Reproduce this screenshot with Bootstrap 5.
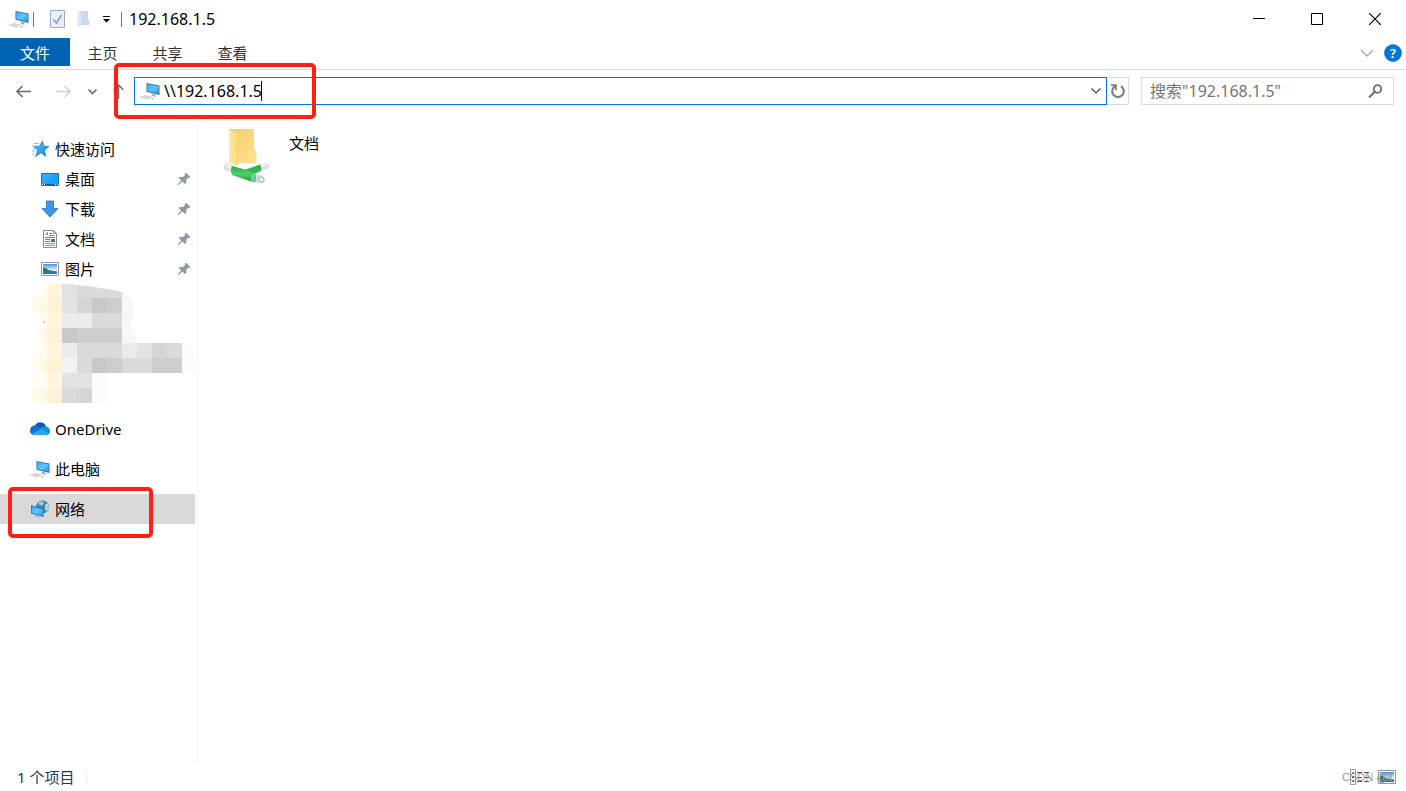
<!DOCTYPE html>
<html lang="zh-CN">
<head>
<meta charset="utf-8">
<meta name="viewport" content="width=device-width, initial-scale=1">
<title>192.168.1.5</title>
<link href="https://cdn.jsdelivr.net/npm/bootstrap@5.3.0/dist/css/bootstrap.min.css" rel="stylesheet">
<style>
  body { font: 15px/20px "Noto Sans", "Noto Sans CJK SC", sans-serif; color: #000; background: #fff; }
  svg { display: block; flex: none; }
  button { font: inherit; border: 0; background: none; padding: 0; color: inherit; }
  a { color: inherit; text-decoration: none; }
  .titlebar { height: 38px; padding-left: 9px; }
  .window-title { font-size: 16px; margin-left: 7px; }
  .divider { width: 1px; height: 15px; background: #777; }
  .title-divider { margin-left: 10px; }
  .caption-buttons { margin-right: 2px; }
  .win-btn { width: 58px; height: 38px; display: grid; place-items: center; }
  .ribbon { height: 32px; border-bottom: 1px solid #dadbdc; color: #333; }
  .ribbon-tab { width: 65px; height: 28px; line-height: 30px; text-align: center; display: block; }
  .ribbon-tab.file { width: 70px; background: #0063b1; color: #fff; }
  .ribbon-tools { padding: 6px 4px 0 0; gap: 10px; }
  .addressbar { height: 51px; padding: 7px 12px 0 15px; }
  .nav-buttons { height: 28px; gap: 15px; margin-right: 9px; }
  .field { height: 28px; border: 1px solid #d9d9d9; position: relative; }
  .field input { border: 0; outline: 0; background: none; min-width: 0; padding: 0; height: 26px; font: inherit; font-size: 16px; color: inherit; }
  .field.location { border-color: #0078d7; padding: 0 4px 0 5px; }
  .field.search { width: 253px; margin-left: 12px; padding: 0 10px 0 8px; color: #6d6d6d; }
  .field.search input::placeholder { color: #757575; opacity: 1; }
  .refresh { width: 22px; height: 28px; border: 1px solid #d9d9d9; border-left: 0; display: grid; place-items: center; }
  .caret { position: absolute; left: 126px; top: 3px; width: 1px; height: 20px; background: #000; }
  .marker { position: absolute; border: 4px solid #ff2015; border-radius: 5px; pointer-events: none; z-index: 2; }
  .marker.on-address { left: -21px; top: -15px; width: 202px; height: 56px; }
  .marker.on-network { left: 8px; top: -7px; width: 145px; height: 51px; }
  .sidebar { width: 198px; padding-top: 13px; border-right: 1px solid #f3f3f3; }
  .tree-item { height: 30px; padding-left: 30px; gap: 5px; position: relative; margin-right: 2px; }
  .tree-item.child { padding-left: 40px; padding-right: 4px; }
  .tree-item.spaced { margin-bottom: 10px; }
  .tree-item.current { background: #d9d9d9; }
  .mosaic { margin: -2px 0 10px 32px; }
  .share { padding: 6px 0 0 25px; gap: 18px; }
  .share-name { padding-top: 6px; }
  .statusbar { height: 29px; padding: 0 10px 0 17px; color: #1e395b; }
  .status-divider { width: 1px; height: 15px; margin-left: 12px; background: #eee; }
  .watermark { position: absolute; left: -8px; top: -2px; font: 11px/20px "Liberation Sans", sans-serif; color: #999; white-space: nowrap; }
</style>
</head>
<body class="vh-100 d-flex flex-column overflow-hidden">

<svg width="0" height="0" class="position-absolute" aria-hidden="true">
  <defs>
    <linearGradient id="screen" x2="1" y2="1"><stop stop-color="#35aefc"/><stop offset=".5" stop-color="#62c3fd"/><stop offset="1" stop-color="#2196e8"/></linearGradient>
    <linearGradient id="star" x2="1" y2="1"><stop stop-color="#5fd0ff"/><stop offset="1" stop-color="#0b7cd8"/></linearGradient>
    <linearGradient id="sky" x2="0" y2="1"><stop stop-color="#4d8fe0"/><stop offset=".6" stop-color="#e4f3fb"/></linearGradient>
    <linearGradient id="flap" x2="1"><stop stop-color="#ffe9a8"/><stop offset="1" stop-color="#f8d674"/></linearGradient>
    <linearGradient id="back" x2="1" y2="1"><stop stop-color="#efca6c"/><stop offset="1" stop-color="#ffe290"/></linearGradient>
    <linearGradient id="pipe" x2="0" y2="1"><stop stop-color="#2cae49"/><stop offset=".5" stop-color="#4fd068"/><stop offset="1" stop-color="#1f9a3c"/></linearGradient>
    <symbol id="pc" viewBox="0 0 20 20">
      <path d="M6.500 2l13 2.500v9.500l-13-3.200z" fill="#33759c"/><path d="M7.300 3l11.400 2.200v7.600L7.300 10z" fill="url(#screen)"/>
      <path d="M12 12.300l3 .7v1.200l2 .8-2.500.8-3-1z" fill="#aab3ba"/>
      <path d="M0 15.500l6-1.500 7 2-5 2z" fill="#dce1e5"/><path d="M0 15.500l8 2.300v.7l-8-2.300z" fill="#b9c1c7"/><path d="M2.500 15.500l4-1M5 16.200l4-1M7.500 16.900l4-1" stroke="#c3cad0" stroke-width=".6"/><path d="M10.500 18l2-1 2 .5-2 1.200z" fill="#b9c1c7"/>
    </symbol>
    <symbol id="pin" viewBox="0 0 14 14">
      <path d="M9 .8l4.500 4.100-1.200 1.100-1-.2-2 2 .1 3-1.400 1.300-2.600-2.500L1.400 13 .5 12.400l3.700-4L1.700 6l1.200-1.200 3.100.2 2.100-2-.5-1z" fill="#8e9aa3"/>
    </symbol>
    <symbol id="photo" viewBox="0 0 18 14">
      <path d="M.5.500h17v13H.500z" fill="#fff" stroke="#979797"/><path d="M2 2h14v10H2z" fill="url(#sky)"/>
      <path d="M2 5.500l3 .5 3 2.300 8 1.200v1H2z" fill="#3b7b5c"/><path d="M2 9.800h14V12H2z" fill="#2878ae"/>
    </symbol>
  </defs>
</svg>

<header>
  <div class="titlebar d-flex align-items-center">
    <svg width="20" height="20"><use href="#pc"/></svg>
    <span class="divider ms-1"></span>
    <button class="ms-3" aria-label="属性"><svg width="15" height="18" viewBox="0 0 15 18"><path d="M.5.500h14v17H.500z" fill="#e9eff9" stroke="#9aabc8"/><path d="M3.500 9.500l3 3.500L11.500 5" fill="none" stroke="#7f9bc9" stroke-width="1.500"/></svg></button>
    <button class="ms-2 ps-1" aria-label="新建文件夹"><svg width="13" height="18" viewBox="0 0 13 18"><path d="M2 1h9v9l1.500 1v4H3z" fill="#c9d7ef"/><path d="M.5 1L4 3v14.500L.5 16z" fill="#dfe8f7"/></svg></button>
    <button class="ms-2 ps-1" aria-label="自定义快速访问工具栏"><svg width="9" height="8" viewBox="0 0 9 8"><path d="M1 1.500h7" stroke="#000"/><path d="M1 4h7L4.500 7.500z"/></svg></button>
    <span class="divider title-divider"></span>
    <span class="window-title">192.168.1.5</span>
    <div class="caption-buttons ms-auto d-flex">
      <button class="win-btn" aria-label="最小化"><svg width="12" height="12" viewBox="0 0 12 12"><path d="M0 5.500h12" stroke="#000"/></svg></button>
      <button class="win-btn" aria-label="最大化"><svg width="12" height="12" viewBox="0 0 12 12"><path d="M.5.500h11v11H.500z" fill="none" stroke="#000"/></svg></button>
      <button class="win-btn" aria-label="关闭"><svg width="12" height="12" viewBox="0 0 12 12"><path d="M0 0l12 12M12 0L0 12" stroke="#000" stroke-width="1.200"/></svg></button>
    </div>
  </div>

  <nav class="ribbon d-flex align-items-start">
    <a class="ribbon-tab file" href="#">文件</a>
    <a class="ribbon-tab" href="#">主页</a>
    <a class="ribbon-tab" href="#">共享</a>
    <a class="ribbon-tab" href="#">查看</a>
    <div class="ribbon-tools ms-auto d-flex align-items-center">
      <button aria-label="展开功能区"><svg width="14" height="8" viewBox="0 0 14 8"><path d="M1 1l6 6 6-6" fill="none" stroke="#aaa" stroke-width="1.300"/></svg></button>
      <button aria-label="帮助"><svg width="18" height="18" viewBox="0 0 20 20"><circle cx="10" cy="10" r="9.500" fill="#0078d7" stroke="#0a62ad" stroke-width=".6"/><text x="10" y="15" text-anchor="middle" font-size="14" font-weight="600" fill="#fff">?</text></svg></button>
    </div>
  </nav>

  <div class="addressbar d-flex">
    <div class="nav-buttons d-flex align-items-center">
      <button aria-label="后退"><svg width="17" height="14" viewBox="0 0 17 14"><path d="M16 7.500H2M7.500 2L2 7.500 7.500 13" fill="none" stroke="#6a6a6a" stroke-width="1.600"/></svg></button>
      <button class="ps-1 ms-1" aria-label="前进"><svg width="17" height="14" viewBox="0 0 17 14"><path d="M1 7.500h14M9.500 2L15 7.500 9.500 13" fill="none" stroke="#d0d0d0" stroke-width="1.400"/></svg></button>
      <button aria-label="最近浏览的位置"><svg width="11" height="7" viewBox="0 0 11 7"><path d="M1.500 1.500l4 4 4-4" fill="none" stroke="#6a6a6a" stroke-width="1.700"/></svg></button>
      <button aria-label="向上"><svg width="12" height="17" viewBox="1 0 12 17"><path d="M6.500 16V2M1.500 7l5-5 5 5" fill="none" stroke="#777" stroke-width="1.600"/></svg></button>
    </div>
    <div class="field location d-flex align-items-center flex-grow-1">
      <svg width="20" height="20"><use href="#pc"/></svg>
      <input class="flex-grow-1 ms-1" type="text" aria-label="地址" value="\\192.168.1.5">
      <span class="caret"></span>
      <button aria-label="以前的位置"><svg width="12" height="8" viewBox="0 0 12 8"><path d="M1.500 1.500L6 6l4.500-4.500" fill="none" stroke="#444" stroke-width="1.200"/></svg></button>
      <div class="marker on-address"></div>
    </div>
    <button class="refresh" aria-label="刷新"><svg width="16" height="16" viewBox="0 0 16 16"><path d="M11 3.300A5.800 5.800 0 1 1 5 3.300" fill="none" stroke="#808080" stroke-width="2.200"/><path d="M1 2.200h5v5" fill="none" stroke="#808080" stroke-width="1.800"/></svg></button>
    <div class="field search d-flex align-items-center">
      <input class="flex-grow-1" type="text" aria-label="搜索" placeholder='搜索"192.168.1.5"'>
      <svg width="15" height="15" viewBox="0 0 15 15" fill="none" stroke="#6d6d6d"><circle cx="9.500" cy="5" r="3.800" stroke-width="1.800"/><path d="M6.500 8L1 13.500" stroke-width="2.200"/></svg>
    </div>
  </div>
</header>

<main class="d-flex flex-grow-1">
  <nav class="sidebar flex-shrink-0">
    <a href="#" class="tree-item d-flex align-items-center"><svg width="20" height="20" viewBox="0 0 20 20"><path d="M12.500 2l1.300 5.200 5.200.300-4.500 3.500 1.200 6.300-4.700-3.600-5.300 3.800 2-6.300L4 7.500l5.500-.3z" fill="url(#star)" stroke="#1277bd" stroke-width=".7"/><path d="M4 4.500h5M2 7h3M3 9.500h3M2 12h4M2 15h3" stroke="#7cc6ee"/></svg>快速访问</a>
    <a href="#" class="tree-item child d-flex align-items-center"><svg width="20" height="20" viewBox="0 0 20 20"><path d="M1.500 4.500h17v12h-17z" fill="#1ba1f8" stroke="#0b72bd"/><path d="M2 16V5h12z" fill="#2fabfb"/><path d="M2 15.500h16" stroke="#075d9c"/><path d="M2 15.500h1M4 15.500h1M15 15.500h1M17 15.500h1" stroke="#fff"/></svg><span class="flex-grow-1">桌面</span><svg width="14" height="14"><use href="#pin"/></svg></a>
    <a href="#" class="tree-item child d-flex align-items-center"><svg width="20" height="20" viewBox="0 0 20 20"><path d="M6.500 2h7v7.500h4.500L10 18 2 9.500h4.500z" fill="#3897e6" stroke="#2672b8" stroke-width=".8"/></svg><span class="flex-grow-1">下载</span><svg width="14" height="14"><use href="#pin"/></svg></a>
    <a href="#" class="tree-item child d-flex align-items-center"><svg width="20" height="20" viewBox="0 0 20 20"><path d="M3.500 1.500h10l3 3v14h-13z" fill="#fff" stroke="#8c8c8c"/><path d="M13.500 1.500v3h3" fill="none" stroke="#8c8c8c"/><path d="M5.500 6l2-2.500V6M9 4.500h3M9 6.500h5.500M5 8.500h10M5 10.500h5M5 12.500h5" fill="none" stroke="#3d8fc9"/><path d="M11 10h4v3h-4z" fill="#3878a8"/><path d="M5 14.500h10M5 16.500h10" stroke="#999"/></svg><span class="flex-grow-1">文档</span><svg width="14" height="14"><use href="#pin"/></svg></a>
    <a href="#" class="tree-item child d-flex align-items-center"><svg width="20" height="20" viewBox="0 0 20 20"><use href="#photo" x="1" y="3" width="18" height="14"/></svg><span class="flex-grow-1">图片</span><svg width="14" height="14"><use href="#pin"/></svg></a>

    <svg class="mosaic" width="165" height="122" viewBox="0 0 165 122" shape-rendering="crispEdges" aria-hidden="true">
      <clipPath id="blob"><path d="M0 121V91h5Q-4 75 7 61 5 50 12 40 0 34 0 22 2 3 20 1 60 3 90 10 110 20 98 44 105 50 105 61H150Q164 63 165 91H75V121z"/></clipPath>
      <g clip-path="url(#blob)">
        <path fill="#fffcf2" d="M0 0h15v16H0zM0 31h15v15H0zM0 61h15v15H0zM0 91h15v15H0z"/>
        <path fill="#fff9ea" d="M0 16h15v15H0zM0 46h15v15H0zM0 76h15v15H0zM0 106h15v16H0z"/>
        <path fill="#fdf5de" d="M15 0h15v16H15zM15 31h15v15H15zM15 61h15v15H15zM15 91h15v15H15z"/>
        <path fill="#fdf1d6" d="M15 16h15v15H15zM15 46h15v15H15zM15 76h15v15H15zM15 106h15v16H15z"/>
        <path fill="#e2e2e2" d="M30 0h15v31H30zM30 91h30v15H30zM105 61h15v15h-15z"/>
        <path fill="#ececec" d="M30 31h30v15H30zM30 61h15v15H30z"/>
        <path fill="#c9c8c8" d="M30 46h15v15H30zM60 16h15v15H60zM60 76h15v15H60z"/>
        <path fill="#f3f3f3" d="M30 76h15v15H30z"/>
        <path fill="#dadada" d="M45 0h45v16H45zM60 31h30v15H60zM45 61h45v15H45zM45 76h15v15H45zM30 106h15v16H30zM90 76h30v15H90zM135 61h15v15h-15z"/>
        <path fill="#d5d4d7" d="M45 16h15v15H45zM45 106h15v16H45zM120 61h15v15h-15z"/>
        <path fill="#cdcdcf" d="M75 16h15v15H75zM45 46h45v15H45zM75 76h15v15H75zM120 76h30v15h-30z"/>
        <path fill="#f6f8f8" d="M90 0h15v61H90z"/><path fill="#eaecec" d="M90 61h15v15H90z"/>
        <path fill="#f9fbfd" d="M150 61h15v30h-15zM60 91h15v31H60z"/>
      </g>
      <path fill="#f3d477" d="M11 39h2v2h-2z"/>
    </svg>

    <a href="#" class="tree-item spaced d-flex align-items-center"><svg width="20" height="20" viewBox="0 0 20 20"><path d="M5 6.500a6 6 0 0 1 11 1l-4 3-7-1z" fill="#0a5fb4"/><path d="M4 6.500Q8 6 11 9.500L5 16Q0 16 0 11.500 0 7.500 4 6.500z" fill="#1075cf"/><path d="M10 10Q13 6.500 16.500 7.500 20 8.500 20 12q0 4-4 4h-4z" fill="#1590df"/><path d="M11 10l8 4.500Q18 16 16 16H4.500Q3 16 2 15z" fill="#2ba7ef"/></svg>OneDrive</a>
    <a href="#" class="tree-item spaced d-flex align-items-center"><svg width="20" height="20"><use href="#pc"/></svg>此电脑</a>
    <a href="#" class="tree-item current d-flex align-items-center"><svg width="20" height="20" viewBox="0 0 20 20"><circle cx="12.500" cy="8" r="6.500" fill="#4387a6"/><path d="M8.500 3.500q3-2 5.500 0l-2 3-3-1zM15 5.500l3-1 1 4-2 4-2-2z" fill="#a5d3e5"/><path d="M1 6l12.500 4v8L1 14.500z" fill="#2878aa"/><path d="M1.800 7.200l11 3.500v6.200l-11-3.200z" fill="url(#screen)"/><path d="M4.500 16l5 1.500v1L4.500 17z" fill="#8fa5b3"/></svg>网络<span class="marker on-network"></span></a>
  </nav>

  <section class="flex-grow-1">
    <a href="#" class="share d-inline-flex">
      <svg width="48" height="58" viewBox="0 0 48 58">
        <path d="M6 2h25v20l2.500 2.500V36H12z" fill="url(#back)"/><path d="M6 2l9 5v32L6 36z" fill="url(#flap)"/>
        <path d="M4 40l8 3" stroke="#dde0e2" stroke-width="7" stroke-linecap="round"/><path d="M36 41l7-2" stroke="#dde0e2" stroke-width="6" stroke-linecap="round"/>
        <path d="M4 39l7 2.500M37 39.500l6-2" stroke="#f5f6f6" stroke-width="2" stroke-linecap="round"/>
        <path d="M32 51l6 1.500" stroke="#d3d8da" stroke-width="7.500" stroke-linecap="round"/><circle cx="38.500" cy="52.500" r="2.500" fill="#f4f5f5" stroke="#aab0b3"/>
        <path d="M21 43L37 37.500q2 2 1 6.500L29 48z" fill="#2fb74d"/>
        <path d="M9 39L24 43q5 1 8 3.500 2 2 0 8.500l-4-.5L9 48q-2-5 0-9z" fill="url(#pipe)"/>
        <path d="M30 46.500q-3 3-2 8h4.500q-2-4 1-7z" fill="#6fcfa0"/>
      </svg>
      <span class="share-name">文档</span>
    </a>
  </section>
</main>

<footer class="statusbar d-flex align-items-center">
  <span>1 个项目</span><span class="status-divider"></span>
  <div class="ms-auto d-flex align-items-center gap-2 position-relative">
    <span class="watermark">CSDN @ll</span>
    <button aria-label="详细信息"><svg width="20" height="16" viewBox="0 0 20 16"><path d="M.5.500h5v15h-5z" fill="#fff" fill-opacity=".6" stroke="#999"/><path d="M2 3h2v2H2z" fill="#4a90d0"/><path d="M2 7h2v2H2z" fill="#333"/><path d="M2 11h2v2H2z" fill="#c44"/><path d="M7 3.500h5M14 3.500h5M7 8.500h5M14 8.500h5M7 12.500h5M14 12.500h5" stroke="#555"/></svg></button>
    <button aria-label="大缩略图"><svg width="18" height="14"><use href="#photo"/></svg></button>
  </div>
</footer>
<script src="https://cdn.jsdelivr.net/npm/bootstrap@5.3.0/dist/js/bootstrap.bundle.min.js"></script>
</body>
</html>
